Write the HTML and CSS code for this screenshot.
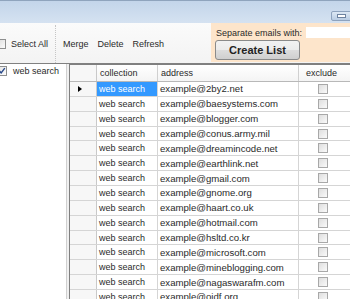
FILE: index.html
```html
<!DOCTYPE html>
<html>
<head>
<meta charset="utf-8">
<link rel="stylesheet" href="styles.css">
</head>
<body>
<div class="window">
  <div class="titlebar">
    <div class="minbtn"><span class="dash"></span></div>
  </div>
  <div class="toolbar">
    <div class="tools">
      <label class="selall"><span class="cb"></span>Select All</label>
      <span class="sep"></span>
      <span class="tool">Merge</span>
      <span class="tool">Delete</span>
      <span class="tool">Refresh</span>
    </div>
    <div class="panel">
      <div class="sepline"><span class="seplabel">Separate emails with:</span><span class="textbox"></span></div>
      <button class="create">Create List</button>
    </div>
  </div>
  <div class="main">
    <div class="leftpanel">
      <div class="coll"><span class="cb checked"><svg width="8" height="8" viewBox="0 0 8 8"><path d="M1.5 4 L3.2 6 L6.8 1.2" fill="none" stroke="#2a4a8a" stroke-width="1.4"/></svg></span>web search</div>
    </div>
    <div class="splitter"></div>
    <div class="grid">
      <div class="row head">
        <div class="c rh"></div><div class="c">collection</div><div class="c">address</div><div class="c ex">exclude</div>
      </div>
      <div class="row"><div class="c rh"><span class="arrow"></span></div><div class="c sel">web search</div><div class="c ad">example@2by2.net</div><div class="c ex"><span class="xb"></span></div></div>
      <div class="row"><div class="c rh"></div><div class="c">web search</div><div class="c ad">example@baesystems.com</div><div class="c ex"><span class="xb"></span></div></div>
      <div class="row"><div class="c rh"></div><div class="c">web search</div><div class="c ad">example@blogger.com</div><div class="c ex"><span class="xb"></span></div></div>
      <div class="row"><div class="c rh"></div><div class="c">web search</div><div class="c ad">example@conus.army.mil</div><div class="c ex"><span class="xb"></span></div></div>
      <div class="row"><div class="c rh"></div><div class="c">web search</div><div class="c ad">example@dreamincode.net</div><div class="c ex"><span class="xb"></span></div></div>
      <div class="row"><div class="c rh"></div><div class="c">web search</div><div class="c ad">example@earthlink.net</div><div class="c ex"><span class="xb"></span></div></div>
      <div class="row"><div class="c rh"></div><div class="c">web search</div><div class="c ad">example@gmail.com</div><div class="c ex"><span class="xb"></span></div></div>
      <div class="row"><div class="c rh"></div><div class="c">web search</div><div class="c ad">example@gnome.org</div><div class="c ex"><span class="xb"></span></div></div>
      <div class="row"><div class="c rh"></div><div class="c">web search</div><div class="c ad">example@haart.co.uk</div><div class="c ex"><span class="xb"></span></div></div>
      <div class="row"><div class="c rh"></div><div class="c">web search</div><div class="c ad">example@hotmail.com</div><div class="c ex"><span class="xb"></span></div></div>
      <div class="row"><div class="c rh"></div><div class="c">web search</div><div class="c ad">example@hsltd.co.kr</div><div class="c ex"><span class="xb"></span></div></div>
      <div class="row"><div class="c rh"></div><div class="c">web search</div><div class="c ad">example@microsoft.com</div><div class="c ex"><span class="xb"></span></div></div>
      <div class="row"><div class="c rh"></div><div class="c">web search</div><div class="c ad">example@mineblogging.com</div><div class="c ex"><span class="xb"></span></div></div>
      <div class="row"><div class="c rh"></div><div class="c">web search</div><div class="c ad">example@nagaswarafm.com</div><div class="c ex"><span class="xb"></span></div></div>
      <div class="row"><div class="c rh"></div><div class="c">web search</div><div class="c ad">example@oidf.org</div><div class="c ex"><span class="xb"></span></div></div>
    </div>
  </div>
</div>
</body>
</html>
```

FILE: styles.css
```css
html, body {
  margin: 0;
  padding: 0;
  background: #ffffff;
}
.window {
  width: 350px;
  height: 299px;
  overflow: hidden;
  font-family: "Liberation Sans", Arial, sans-serif;
  font-size: 9px;
  color: #2a2a2a;
  display: flex;
  flex-direction: column;
}
.titlebar {
  height: 22px;
  flex: none;
  border-top: 1px solid #8fa4bd;
  background: linear-gradient(#c3d5ea, #d5e2f1);
  display: flex;
  justify-content: flex-end;
  align-items: flex-end;
}
.minbtn {
  width: 19px;
  height: 8px;
  margin-bottom: 2px;
  margin-right: -2px;
  border: 1px solid #8ea3be;
  border-radius: 2px;
  background: linear-gradient(#dde8f4, #b9cce3);
  display: flex;
  align-items: center;
  justify-content: center;
}
.dash {
  width: 7px;
  height: 2px;
  background: #ffffff;
  border: 1px solid #6d83a0;
}
.toolbar {
  height: 41px;
  flex: none;
  display: flex;
  background: linear-gradient(#fbfbfb, #f3f3f3);
  border-bottom: 1px solid #808080;
  box-sizing: border-box;
}
.tools {
  flex: 1;
  display: flex;
  align-items: center;
  padding-top: 2px;
}
.selall {
  display: flex;
  align-items: center;
  margin-left: -4px;
}
.cb {
  width: 10px;
  height: 10px;
  box-sizing: border-box;
  border: 1px solid #8e8f8f;
  background: linear-gradient(135deg, #dcdcdc, #fbfbfb);
  margin-right: 5px;
  display: inline-flex;
  align-items: center;
  justify-content: center;
  flex: none;
}
.sep {
  width: 0;
  height: 38px;
  border-left: 1px dotted #c6c6c6;
  margin: 0 7px 0 7px;
  align-self: flex-end;
}
.tool {
  margin-right: 9px;
}
.panel {
  width: 139px;
  flex: none;
  background: #fde5cb;
  display: flex;
  flex-direction: column;
  padding: 4px 0 0 4px;
  box-sizing: border-box;
  margin-bottom: 1px;
}
.sepline {
  display: flex;
  align-items: center;
  height: 11px;
}
.seplabel {
  margin-left: 1px;
  white-space: nowrap;
}
.textbox {
  flex: 1;
  height: 11px;
  background: #ffffff;
  margin-left: 4px;
}
.create {
  margin-top: 2px;
  width: 85px;
  height: 20px;
  border: 1px solid #8a8a8a;
  border-radius: 3px;
  background: linear-gradient(#f2f2f2 0%, #ebebeb 50%, #dddddd 51%, #cfcfcf 100%);
  font-family: "Liberation Sans", Arial, sans-serif;
  font-size: 11px;
  font-weight: bold;
  color: #222222;
  padding: 0;
}
.main {
  flex: 1;
  display: flex;
  min-height: 0;
}
.leftpanel {
  width: 66px;
  flex: none;
  background: #ffffff;
  padding-top: 2px;
  border-right: 1px solid #d0d0d0;
}
.coll {
  display: flex;
  align-items: center;
  margin-left: -3px;
  height: 10px;
}
.coll .cb {
  margin-right: 6px;
  background: linear-gradient(135deg, #e4e4e4, #fdfdfd);
}
.splitter {
  width: 2px;
  flex: none;
  background: #f0f0f0;
}
.grid {
  flex: 1;
  border-left: 1px solid #7f7f7f;
  border-top: 1px solid #7f7f7f;
  background: #ffffff;
  overflow: hidden;
}
.row {
  display: grid;
  grid-template-columns: 27px 61px 141px 1fr;
  height: 14.86px;
  box-sizing: border-box;
  border-bottom: 1px solid #d5d5d5;
}
.row.head {
  height: 17px;
  border-bottom: 1px solid #b8b8b8;
  background: linear-gradient(#ffffff, #f4f4f4);
}
.c {
  border-right: 1px solid #d5d5d5;
  padding-left: 2px;
  display: flex;
  align-items: center;
  white-space: nowrap;
  overflow: hidden;
}
.c.ad {
  font-size: 9.6px;
}
.head .c {
  padding-left: 3px;
  border-right-color: #d0d0d0;
}
.head .c.ex {
  justify-content: center;
  padding-left: 0;
  padding-right: 6px;
}
.c.rh {
  background: #f7f7f7;
  border-right-color: #c9c9c9;
  padding-left: 0;
  justify-content: center;
}
.c.sel {
  background: #3399ff;
  color: #ffffff;
}
.c.ex {
  border-right: none;
  justify-content: center;
  padding-left: 0;
  padding-right: 3px;
}
.arrow {
  width: 0;
  height: 0;
  border-top: 3px solid transparent;
  border-bottom: 3px solid transparent;
  border-left: 4px solid #000000;
  margin-left: -7px;
}
.xb {
  width: 10px;
  height: 10px;
  box-sizing: border-box;
  border: 1px solid #a8a8a8;
  background: linear-gradient(135deg, #dedede, #fafafa);
}
```
